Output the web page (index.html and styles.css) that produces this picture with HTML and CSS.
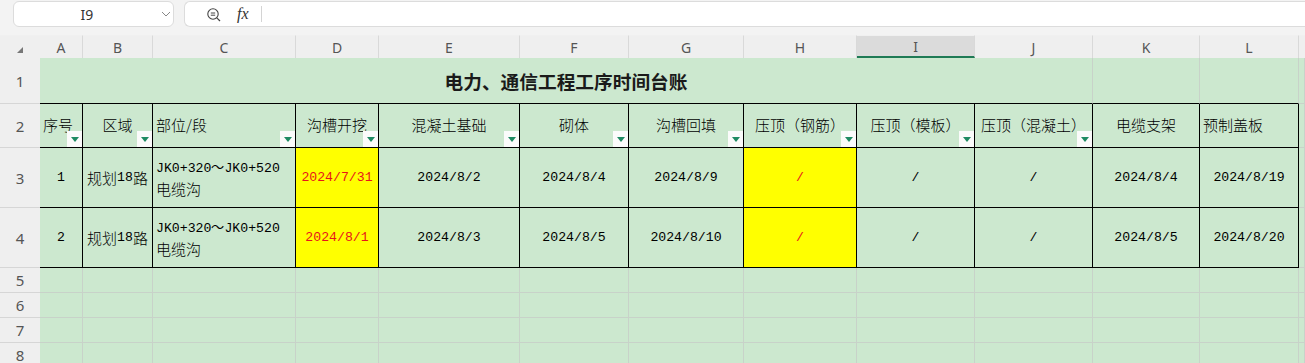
FILE: index.html
```html
<!DOCTYPE html>
<html lang="zh-CN">
<head>
    <meta charset="UTF-8">
    <title>电力、通信工程工序时间台账</title>
    <link rel="stylesheet" href="styles.css">
</head>
<body>
    <div class="toolbar">
        <div class="name-box">
            <span class="cell-ref">I9</span>
            <svg class="chevron" width="10" height="6" viewBox="0 0 10 6"><path d="M1 1 L5 5 L9 1" fill="none" stroke="#888" stroke-width="1"/></svg>
        </div>
        <div class="formula-box">
            <svg class="zoom-icon" width="16" height="16" viewBox="0 0 16 16">
                <circle cx="7" cy="7" r="5.2" fill="none" stroke="#444" stroke-width="1.1"/>
                <path d="M4.8 6 H9.2 M4.8 8.2 H9.2" stroke="#444" stroke-width="1"/>
                <path d="M10.8 10.8 L14 14" stroke="#444" stroke-width="1.2"/>
            </svg>
            <span class="fx">fx</span>
            <span class="sep"></span>
        </div>
    </div>

    <div class="sheet">
        <!-- column headers -->
        <div class="ch corner"><svg width="8" height="8" viewBox="0 0 8 8"><polygon points="7,1 7,7 1,7" fill="#777"/></svg></div>
        <div class="ch">A</div>
        <div class="ch">B</div>
        <div class="ch">C</div>
        <div class="ch">D</div>
        <div class="ch">E</div>
        <div class="ch">F</div>
        <div class="ch">G</div>
        <div class="ch">H</div>
        <div class="ch selected">I</div>
        <div class="ch">J</div>
        <div class="ch">K</div>
        <div class="ch">L</div>
        <div class="ch filler"></div>

        <!-- row 1 -->
        <div class="rh">1</div>
        <div class="c title">电力、通信工程工序时间台账</div>
        <div class="c under"></div>
        <div class="c under"></div>
        <div class="c"></div>

        <!-- row 2 -->
        <div class="rh">2</div>
        <div class="c t hd left">序号<span class="filter"></span></div>
        <div class="c t hd">区域<span class="filter"></span></div>
        <div class="c t hd left">部位/段<span class="filter"></span></div>
        <div class="c t hd">沟槽开挖<span class="filter"></span></div>
        <div class="c t hd">混凝土基础<span class="filter"></span></div>
        <div class="c t hd">砌体<span class="filter"></span></div>
        <div class="c t hd">沟槽回填<span class="filter"></span></div>
        <div class="c t hd">压顶（钢筋）<span class="filter"></span></div>
        <div class="c t hd">压顶（模板）<span class="filter"></span></div>
        <div class="c t hd">压顶（混凝土）<span class="filter"></span></div>
        <div class="c t hd">电缆支架</div>
        <div class="c t hd left">预制盖板</div>
        <div class="c"></div>

        <!-- row 3 -->
        <div class="rh">3</div>
        <div class="c t"><span class="num">1</span></div>
        <div class="c t">规划<span class="num">18</span>路</div>
        <div class="c t left"><div><span class="num">JK0+320～JK0+520</span><br>电缆沟</div></div>
        <div class="c t yellow red"><span class="num">2024/7/31</span></div>
        <div class="c t"><span class="num">2024/8/2</span></div>
        <div class="c t"><span class="num">2024/8/4</span></div>
        <div class="c t"><span class="num">2024/8/9</span></div>
        <div class="c t yellow red"><span class="num">/</span></div>
        <div class="c t"><span class="num">/</span></div>
        <div class="c t"><span class="num">/</span></div>
        <div class="c t"><span class="num">2024/8/4</span></div>
        <div class="c t"><span class="num">2024/8/19</span></div>
        <div class="c"></div>

        <!-- row 4 -->
        <div class="rh">4</div>
        <div class="c t"><span class="num">2</span></div>
        <div class="c t">规划<span class="num">18</span>路</div>
        <div class="c t left"><div><span class="num">JK0+320～JK0+520</span><br>电缆沟</div></div>
        <div class="c t yellow red"><span class="num">2024/8/1</span></div>
        <div class="c t"><span class="num">2024/8/3</span></div>
        <div class="c t"><span class="num">2024/8/5</span></div>
        <div class="c t"><span class="num">2024/8/10</span></div>
        <div class="c t yellow red"><span class="num">/</span></div>
        <div class="c t"><span class="num">/</span></div>
        <div class="c t"><span class="num">/</span></div>
        <div class="c t"><span class="num">2024/8/5</span></div>
        <div class="c t"><span class="num">2024/8/20</span></div>
        <div class="c"></div>

        <!-- empty rows -->
        <div class="rh">5</div>
        <div class="c"></div><div class="c"></div><div class="c"></div><div class="c"></div><div class="c"></div><div class="c"></div><div class="c"></div><div class="c"></div><div class="c"></div><div class="c"></div><div class="c"></div><div class="c"></div><div class="c"></div>
        <div class="rh">6</div>
        <div class="c"></div><div class="c"></div><div class="c"></div><div class="c"></div><div class="c"></div><div class="c"></div><div class="c"></div><div class="c"></div><div class="c"></div><div class="c"></div><div class="c"></div><div class="c"></div><div class="c"></div>
        <div class="rh">7</div>
        <div class="c"></div><div class="c"></div><div class="c"></div><div class="c"></div><div class="c"></div><div class="c"></div><div class="c"></div><div class="c"></div><div class="c"></div><div class="c"></div><div class="c"></div><div class="c"></div><div class="c"></div>
        <div class="rh">8</div>
        <div class="c"></div><div class="c"></div><div class="c"></div><div class="c"></div><div class="c"></div><div class="c"></div><div class="c"></div><div class="c"></div><div class="c"></div><div class="c"></div><div class="c"></div><div class="c"></div><div class="c"></div>
    </div>
</body>
</html>
```

FILE: styles.css
```css
* {
    box-sizing: border-box;
}
body {
    margin: 0;
    height: 363px;
    overflow: hidden;
    background-color: #f0f0f0;
    font-family: "Noto Sans CJK SC", sans-serif;
}
.toolbar {
    height: 35px;
    display: flex;
    align-items: flex-start;
    padding: 1px 0 0 13px;
    gap: 10px;
    background-color: #f3f3f3;
}
.name-box {
    width: 161px;
    height: 26px;
    display: flex;
    align-items: center;
    background-color: #fff;
    border: 1px solid #dcdcdc;
    border-radius: 6px;
}
.cell-ref {
    width: 146px;
    text-align: center;
    font-family: "Noto Sans", sans-serif;
    font-size: 14px;
    color: #333;
}
.chevron {
    margin-left: 1px;
}
.formula-box {
    flex: 1;
    height: 26px;
    display: flex;
    align-items: center;
    padding-left: 21px;
    background-color: #fff;
    border: 1px solid #dcdcdc;
    border-right: none;
    border-radius: 6px 0 0 6px;
}
.zoom-icon {
    margin-top: 1px;
}
.fx {
    margin-left: 15px;
    font-family: "Liberation Serif", serif;
    font-style: italic;
    font-size: 16px;
    color: #333;
}
.sep {
    margin-left: 12px;
    width: 1px;
    height: 16px;
    background-color: #d4d4d4;
}
.sheet {
    display: grid;
    grid-template-columns: 40px 43px 70px 143px 83px 141px 109px 115px 113px 118px 118px 107px 99px 1fr;
    grid-template-rows: 23px 46px 44px 60px 60px 25px 25px 25px 25px;
}
.ch {
    display: flex;
    align-items: center;
    justify-content: center;
    background-color: #efefef;
    color: #555;
    font-family: "Noto Sans", sans-serif;
    font-size: 14px;
    border-right: 1px solid #d9d9d9;
    border-top: 1px solid #f0f0f0;
}
.ch.corner {
    border-right: none;
    padding-top: 6px;
}
.ch.filler {
    border-right: none;
}
.ch.selected {
    background-color: #dbdbdb;
    border-bottom: 2px solid #1f7a55;
}
.rh {
    display: flex;
    align-items: center;
    justify-content: center;
    background-color: #efefef;
    color: #555;
    font-family: "Noto Sans", sans-serif;
    font-size: 15px;
    border-bottom: 1px solid #d6d6d6;
}
.c {
    position: relative;
    display: flex;
    align-items: center;
    justify-content: center;
    background-color: #cce8cf;
    border-right: 1px solid #c8d2c9;
    border-bottom: 1px solid #c8d2c9;
    font-size: 15px;
    font-weight: 300;
    line-height: 20px;
    color: #000;
    white-space: nowrap;
}
.c.title {
    grid-column: span 10;
    border-bottom-color: #000;
    font-size: 18.7px;
    font-weight: 700;
    color: #1a1a1a;
}
.c.under {
    border-bottom-color: #000;
}
.c.t {
    border-right-color: #000;
    border-bottom-color: #000;
}
.c.hd {
    padding-bottom: 2px;
}
.c.left {
    justify-content: flex-start;
    padding-left: 3px;
}
.c.yellow {
    background-color: #ffff00;
}
.c.red {
    color: #e8141a;
}
.num {
    font-family: "Liberation Mono", monospace;
    font-size: 13.2px;
    font-weight: 400;
}
.filter {
    position: absolute;
    right: 0;
    bottom: 0;
    width: 15px;
    height: 16px;
    background-color: #fbfbfb;
    display: flex;
    align-items: center;
    justify-content: center;
}
.filter::after {
    content: "";
    border-left: 4px solid transparent;
    border-right: 4px solid transparent;
    border-top: 5px solid #1e8a62;
}
```
